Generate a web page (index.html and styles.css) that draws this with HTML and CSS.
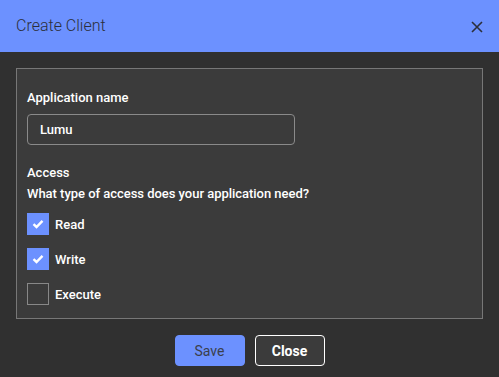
FILE: index.html
```html
<!DOCTYPE html>
<html lang="en">

<head>
    <meta charset="UTF-8">
    <meta name="viewport" content="width=device-width, initial-scale=1.0">
    <title>Create Client</title>
    <link rel="stylesheet" href="styles.css">
</head>

<body>
    <div class="dialog">
        <div class="dialogHeader">
            <span class="dialogTitle">Create Client</span>
            <button class="closeIcon" aria-label="Close">
                <svg width="12" height="12" viewBox="0 0 12 12">
                    <path d="M1 1 L11 11 M11 1 L1 11" stroke="#2b2f3a" stroke-width="1.6" fill="none"/>
                </svg>
            </button>
        </div>

        <div class="dialogBody">
            <div class="panel">
                <label class="fieldLabel" for="appName">Application name</label>
                <input type="text" id="appName" class="textInput" value="Lumu">

                <div class="sectionTitle">Access</div>
                <div class="question">What type of access does your application need?</div>

                <label class="checkRow">
                    <span class="checkBox checked">
                        <svg width="12" height="10" viewBox="0 0 12 10">
                            <path d="M1.5 5.2 L4.5 8 L10.5 1.8" stroke="#fff" stroke-width="2.4" fill="none"/>
                        </svg>
                    </span>
                    Read
                </label>
                <label class="checkRow">
                    <span class="checkBox checked">
                        <svg width="12" height="10" viewBox="0 0 12 10">
                            <path d="M1.5 5.2 L4.5 8 L10.5 1.8" stroke="#fff" stroke-width="2.4" fill="none"/>
                        </svg>
                    </span>
                    Write
                </label>
                <label class="checkRow">
                    <span class="checkBox"></span>
                    Execute
                </label>
            </div>
        </div>

        <div class="dialogFooter">
            <button class="btn btnSave">Save</button>
            <button class="btn btnClose">Close</button>
        </div>
    </div>
</body>

</html>
```

FILE: styles.css
```css
body {
    margin: 0;
    font-family: 'Roboto', 'Liberation Sans', sans-serif;
    background-color: #303030;
    color: #fff;
}

.dialog {
    width: 499px;
    height: 377px;
    display: flex;
    flex-direction: column;
}

.dialogHeader {
    height: 52px;
    background-color: #6c91ff;
    display: flex;
    align-items: center;
    justify-content: space-between;
    padding: 0 12px 0 16px;
}

.dialogTitle {
    font-size: 16px;
    font-weight: 300;
    color: #2b2f3a;
    margin-top: -2px;
}

.closeIcon {
    background: none;
    border: none;
    padding: 4px;
    display: flex;
    cursor: pointer;
    margin-top: 2px;
}

.dialogBody {
    padding: 16px 16px 0 16px;
}

.panel {
    height: 251px;
    box-sizing: border-box;
    border: 1px solid #777;
    background-color: #3b3b3b;
    padding: 21px 10px 0 10px;
    display: flex;
    flex-direction: column;
    align-items: flex-start;
}

.fieldLabel {
    font-size: 13px;
    font-weight: 500;
    line-height: 16px;
}

.textInput {
    margin-top: 8px;
    width: 268px;
    height: 31px;
    box-sizing: border-box;
    border: 1px solid #8a8a8a;
    border-radius: 4px;
    background-color: #3b3b3b;
    color: #fff;
    font-family: inherit;
    font-size: 13px;
    font-weight: 500;
    padding: 0 12px;
}

.sectionTitle {
    margin-top: 20px;
    font-size: 13px;
    font-weight: 500;
    line-height: 16px;
}

.question {
    margin-top: 5px;
    font-size: 13px;
    font-weight: 500;
    line-height: 16px;
    letter-spacing: -0.03px;
}

.checkRow {
    display: flex;
    align-items: center;
    gap: 6px;
    font-size: 13px;
    font-weight: 500;
    margin-top: 11px;
}

.checkRow + .checkRow {
    margin-top: 13px;
}

.checkBox {
    width: 22px;
    height: 22px;
    box-sizing: border-box;
    border: 1px solid #888;
    display: flex;
    align-items: center;
    justify-content: center;
}

.checkBox.checked {
    background-color: #6c91ff;
    border-color: #6c91ff;
}

.dialogFooter {
    display: flex;
    justify-content: center;
    gap: 10px;
    padding-top: 16px;
}

.btn {
    width: 70px;
    height: 31px;
    border-radius: 4px;
    font-family: inherit;
    font-size: 14px;
    cursor: pointer;
}

.btnSave {
    background-color: #6c91ff;
    border: 1px solid #6c91ff;
    color: #3b3f4c;
}

.btnClose {
    background-color: #3b3b3b;
    border: 1px solid #fff;
    color: #fff;
    font-weight: 700;
}
```
